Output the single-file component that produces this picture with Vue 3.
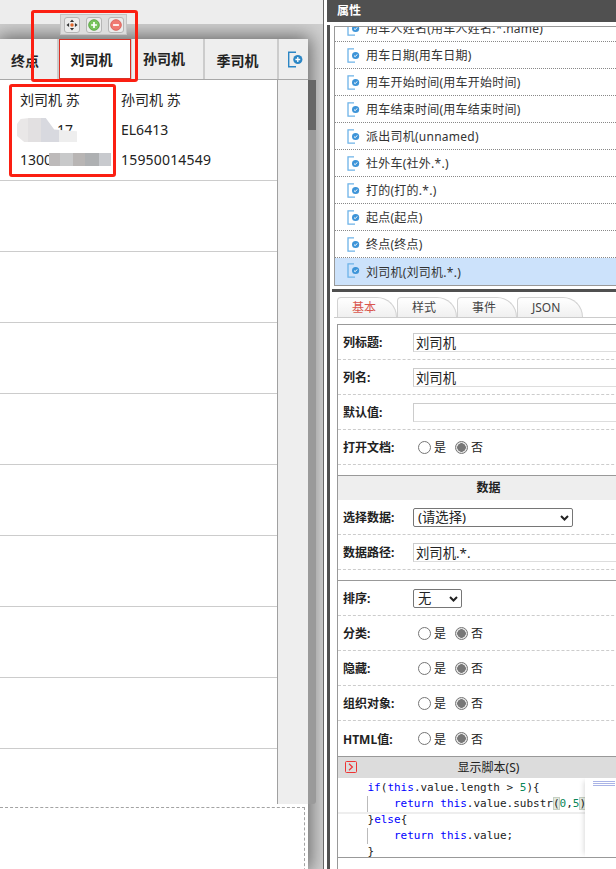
<script setup>
const headers = ['终点', '刘司机', '孙司机', '季司机']
const emptyRows = 8
const fields = [
  '用车人姓名(用车人姓名.*.name)', '用车日期(用车日期)', '用车开始时间(用车开始时间)', '用车结束时间(用车结束时间)',
  '派出司机(unnamed)', '社外车(社外.*.)', '打的(打的.*.)', '起点(起点)', '终点(终点)', '刘司机(刘司机.*.)'
]
const tabs = ['基本', '样式', '事件', 'JSON']
const switchesB = ['分类:', '隐藏:', '组织对象:', 'HTML值:']
</script>

<template>
  <div class="app">
    <section class="left">
      <div class="top-strip"></div>
      <div class="stage">
        <div class="card">
          <div class="head">
            <div v-for="(h, i) in headers" :key="h" class="hcell" :class="['h' + i, { active: i === 1 }]">{{ h }}</div>
            <div class="hcell hadd">
              <svg width="17" height="17" viewBox="0 0 17 17">
                <path d="M9 1.2H1.7v14.6H9" fill="none" stroke="#2b86c5" stroke-width="1.4" />
                <circle cx="10.8" cy="8.5" r="4.6" fill="#2b86c5" />
                <path d="M8.4 8.5h4.8M10.8 6.1v4.8" stroke="#fff" stroke-width="1.3" />
              </svg>
            </div>
          </div>
          <div class="body">
            <div class="grid">
              <div class="row first">
                <div class="cell c1"><div>刘司机 苏</div><div class="hidden-num">17</div><div>1300</div></div>
                <div class="cell"><div>孙司机 苏</div><div>EL6413</div><div class="phone">15950014549</div></div>
              </div>
              <div v-for="n in emptyRows" :key="n" class="row"></div>
            </div>
            <div class="track"></div>
          </div>
          <div class="footer"><div class="dashed"></div></div>
        </div>
      </div>
      <div class="blur blur-a"></div>
      <div class="blur blur-b"></div>
      <div class="toolbar">
        <span class="tbtn">
          <svg width="14" height="14" viewBox="0 0 14 14">
            <path d="M7 .5 9.4 3.6H4.6zM7 13.5 4.6 10.4h4.8zM.5 7l3.1-2.4v4.8zM13.5 7l-3.1 2.4V4.6z" fill="#333" />
            <circle cx="7" cy="7" r="2" fill="#e2662a" />
          </svg>
        </span>
        <span class="tbtn">
          <svg width="14" height="14" viewBox="0 0 14 14">
            <circle cx="7" cy="7" r="6.2" fill="#78c45c" stroke="#55a040" />
            <path d="M3.6 7h6.8M7 3.6v6.8" stroke="#fff" stroke-width="2" />
          </svg>
        </span>
        <span class="tbtn">
          <svg width="14" height="14" viewBox="0 0 14 14">
            <circle cx="7" cy="7" r="6.2" fill="#f07a72" stroke="#d85c54" />
            <path d="M3.6 7h6.8" stroke="#fff" stroke-width="2" />
          </svg>
        </span>
      </div>
      <div class="mark mark-a"></div>
      <div class="mark mark-b"></div>
    </section>

    <div class="split"></div>

    <section class="right">
      <header class="title">属性</header>
      <div class="main">
        <div class="rail"></div>
        <div class="panels">
          <div class="listwrap">
            <ul class="list">
              <li v-for="(f, i) in fields" :key="f" class="item" :class="{ sel: i === fields.length - 1 }">
                <svg width="13" height="15" viewBox="0 0 13 15">
                  <path d="M7 .8H1v13.4h7" fill="none" stroke="#6db3e8" stroke-width="1.3" />
                  <circle cx="8.6" cy="7.5" r="3.6" fill="#3d94d8" />
                  <path d="M7 7.6l1.2 1.1L10.2 6.4" fill="none" stroke="#fff" stroke-width="1" />
                </svg>
                <span>{{ f }}</span>
              </li>
            </ul>
          </div>
          <div class="hbar"></div>
          <div class="tabs">
            <div v-for="(t, i) in tabs" :key="t" class="tab" :class="{ on: i === 0, wide: i === 3 }">{{ t }}</div>
          </div>
          <div class="form">
            <div class="frow"><label>列标题:</label><input class="txt" value="刘司机" /></div>
            <div class="frow"><label>列名:</label><input class="txt" value="刘司机" /></div>
            <div class="frow"><label>默认值:</label><input class="txt" value="" /></div>
            <div class="frow">
              <label>打开文档:</label>
              <span class="radios"><input type="radio" name="r0" /><em>是</em><input type="radio" name="r0" checked /><em>否</em></span>
            </div>
            <div class="section">数据</div>
            <div class="frow">
              <label>选择数据:</label>
              <span class="selbox data">
                <select><option>(请选择)</option></select>
                <svg width="9" height="6" viewBox="0 0 9 6"><path d="M1 1l3.5 3.5L8 1" fill="none" stroke="#222" stroke-width="2" /></svg>
              </span>
            </div>
            <div class="frow"><label>数据路径:</label><input class="txt" value="刘司机.*." /></div>
            <div class="group">
              <div class="frow">
                <label>排序:</label>
                <span class="selbox sort">
                  <select><option>无</option></select>
                  <svg width="9" height="6" viewBox="0 0 9 6"><path d="M1 1l3.5 3.5L8 1" fill="none" stroke="#222" stroke-width="2" /></svg>
                </span>
              </div>
              <div v-for="(s, i) in switchesB" :key="s" class="frow" :class="{ nodash: i === switchesB.length - 1 }">
                <label>{{ s }}</label>
                <span class="radios"><input type="radio" :name="'s' + i" /><em>是</em><input type="radio" :name="'s' + i" checked /><em>否</em></span>
              </div>
            </div>
            <div class="scripthead">
              <span class="sicon">
                <svg width="12" height="12" viewBox="0 0 12 12"><rect x=".5" y=".5" width="11" height="11" rx="1" fill="none" stroke="#e33" /><path d="M4 2.8 7.4 6 4 9.2" fill="none" stroke="#e33" stroke-width="1.2" /></svg>
              </span>
              显示脚本(S)
            </div>
            <div class="code">
              <pre class="src"><div class="ln"><span class="kw">    if</span>(<span class="kw">this</span>.value.length &gt; <span class="num">5</span>){</div><div class="ln cur"><i class="guide"></i><span class="kw">        return this</span>.value.substr<b class="br">(</b><span class="num">0</span>,<span class="num">5</span><b class="br">)</b></div><div class="ln">    }<span class="kw">else</span>{</div><div class="ln"><i class="guide"></i><span class="kw">        return this</span>.value;</div><div class="ln">    }</div></pre>
              <div class="minimap"><i></i><i></i><i></i></div>
            </div>
            <div class="tail"></div>
          </div>
        </div>
      </div>
    </section>
  </div>
</template>

<style scoped>
.app {
  display: flex;
  width: 616px;
  height: 869px;
  overflow: hidden;
  background: #fff;
  font-family: "Noto Sans", "Noto Sans CJK SC", sans-serif;
  color: #222;
  font-size: 12px;
}
.left { position: relative; width: 323px; flex: none; display: flex; flex-direction: column; }
.top-strip { height: 24px; background: #ededed; flex: none; }
.stage { flex: 1; background: #d0d0d0; padding: 15px 15px 0 0; overflow: hidden; min-height: 0; }
.card { width: 308px; height: 830px; display: flex; flex-direction: column; background: #fff; box-shadow: 0 0 18px 2px rgba(0, 0, 0, .55); }
.head { height: 41px; flex: none; display: flex; background: #eee; border-bottom: 1px solid #a8a8a8; box-sizing: border-box; }
.hcell { box-sizing: border-box; display: flex; align-items: center; justify-content: center; font-weight: 700; font-size: 14px; border-right: 2px solid #ccc; padding-right: 7px; }
.h0 { width: 59px; padding-top: 2px; }
.h1 { width: 72px; border: 1px solid #d93025; background: #fff; padding-bottom: 1px; }
.h2 { width: 74px; padding-bottom: 3px; border-left: 1px solid #ccc; }
.h3 { width: 74px; padding-top: 2px; }
.hadd { width: 29px; border: 0; padding: 0 0 0 3px; }
.body { display: flex; height: 724px; flex: none; }
.grid { width: 277px; flex: none; border-right: 1px solid #a0a0a0; box-sizing: content-box; }
.row { height: 70px; border-bottom: 1px solid #ccc; }
.row.first { display: flex; box-sizing: border-box; height: 101px; padding-top: 5px; }
.cell { font-size: 14px; line-height: 30px; color: #222; }
.c1 { width: 121px; padding-left: 20px; box-sizing: border-box; }
.hidden-num { padding-left: 37px; }
.phone { letter-spacing: .18px; }
.track { flex: 1; background: #eee; }
.footer { flex: 1; padding: 3px 3px 0 0; background: #fff; min-height: 0; }
.dashed { height: 100px; border: 1px dashed #a3a3a3; border-left: 0; box-sizing: border-box; }
.left::after {
  content: "";
  position: absolute;
  left: 308px;
  top: 80px;
  width: 8px;
  height: 724px;
  background: linear-gradient(#666 0 50px, #9a9a9a 50px);
  border-radius: 0 0 3px 0;
}
.blur { position: absolute; }
.blur-a {
  left: 17px;
  top: 118px;
  width: 60px;
  height: 24px;
  background: linear-gradient(90deg, #e9e7e7 0 18%, #e2e0e1 18% 40%, #d8d9df 40% 70%, #eeeeee 70%);
  clip-path: polygon(0 25%, 6% 4%, 20% 0, 48% 0, 62% 48%, 100% 55%, 100% 100%, 12% 100%, 0 75%);
}
.blur-b { left: 49px; top: 153px; width: 62px; height: 13px; background: linear-gradient(90deg, #bdbaba 0 18%, #c8c9ca 18% 38%, #b8b5b4 38% 58%, #aeb0b2 58% 80%, #c8cace 80%); }
.toolbar { position: absolute; left: 60px; top: 14px; width: 67px; height: 21px; box-sizing: border-box; display: flex; align-items: center; gap: 6px; padding: 0 3px; background: #ddd; border: 1px solid #c4c4c4; }
.tbtn { width: 16px; height: 16px; box-sizing: border-box; display: flex; align-items: center; justify-content: center; background: #ececec; border: 1px solid #b5b5b5; border-radius: 3px; flex: none; }
.tbtn svg { flex: none; width: 12px; height: 12px; }
.mark { position: absolute; border: 3px solid #fb1f12; border-radius: 3px; box-sizing: border-box; }
.mark-a { left: 31px; top: 10px; width: 107px; height: 72px; }
.mark-b { left: 9px; top: 84px; width: 107px; height: 93px; }

.split { width: 4px; flex: none; border-left: 1px solid #666; box-sizing: border-box; background: #fff; }
.right { flex: 1; min-width: 0; display: flex; flex-direction: column; }
.title { height: 22px; flex: none; background: #505050; color: #fff; font-weight: 700; font-size: 12px; line-height: 21px; padding-left: 10px; }
.main { flex: 1; display: flex; min-height: 0; padding-top: 3px; }
.rail { width: 3px; flex: none; background: #505050; }
.panels { flex: 1; min-width: 0; padding-left: 4px; overflow: hidden; }
.listwrap { height: 260px; margin-top: 1px; border: 1px solid #999; border-right: 0; box-sizing: border-box; overflow: hidden; }
.list { list-style: none; margin: -12px 0 0; padding: 0; }
.item { height: 26px; border-bottom: 1px dotted #888; display: flex; align-items: center; padding-left: 12px; gap: 6px; font-size: 12px; letter-spacing: .25px; color: #333; white-space: nowrap; }
.item.sel { background: #cce2fb; border-bottom: 0; height: 32px; align-items: flex-start; padding-top: 5px; box-sizing: border-box; }
.hbar { height: 3px; background: #505050; margin: 3px 0 0 -2px; }
.tabs { display: flex; height: 20px; padding: 5px 0 0 3px; border-bottom: 1px solid #ccc; }
.tab { width: 60px; padding-left: 14px; line-height: 20px; background: linear-gradient(#fff, #f0f0f0); border: 1px solid #d2d2d2; border-bottom: 0; border-radius: 4px 20px 0 0; box-sizing: border-box; font-size: 12px; color: #444; flex: none; }
.tab.wide { width: 66px; }
.tab.on { color: #d9574f; }
.form { margin: 6px 0 0 3px; width: 302px; border: 1px solid #999; border-right: 0; border-bottom: 0; height: 545px; box-sizing: border-box; }
.frow { height: 35px; box-sizing: border-box; border-bottom: 1px dashed #ccc; display: flex; align-items: center; padding-left: 5px; white-space: nowrap; }
.frow label { width: 70px; flex: none; font-weight: 700; font-size: 12px; color: #222; }
.txt { width: 260px; height: 19px; flex: none; box-sizing: border-box; border: 1px solid #ddd; border-top-color: #ccc; border-left-color: #ccc; padding: 0 2px; font: 13.33px "Noto Sans", "Noto Sans CJK SC", sans-serif; color: #222; outline: 0; }
.radios { display: flex; align-items: center; padding-left: 5px; font-size: 12px; }
.radios em { font-style: normal; margin: 0 9px 0 3px; color: #222; }
.radios input { appearance: none; width: 13px; height: 13px; margin: 0; border: 1px solid #767676; border-radius: 50%; background: #fff; }
.radios input:checked { background: radial-gradient(circle, #777 0 4px, #e4e4e4 4.5px); }
.section { height: 25px; margin-top: 10px; background: #eee; border-top: 1px solid #999; box-sizing: border-box; text-align: center; font-weight: 700; line-height: 24px; font-size: 12px; }
.selbox { position: relative; display: block; height: 19px; flex: none; }
.selbox.data { width: 160px; }
.selbox.sort { width: 49px; }
.selbox select { appearance: none; display: block; width: 100%; height: 19px; box-sizing: border-box; padding: 0 0 0 4px; line-height: 16px; font: 13.33px/16px "Noto Sans", "Noto Sans CJK SC", sans-serif; background: #fff; color: #222; border: 1px solid #767676; border-radius: 2px; }
.selbox svg { position: absolute; right: 4px; top: 7px; pointer-events: none; }
.group { margin-top: 10px; border-top: 1px solid #999; }
.frow.nodash { border-bottom: 0; }
.scripthead { height: 22px; box-sizing: border-box; background: #dcdcdc; border-top: 1px solid #999; position: relative; text-align: center; line-height: 21px; font-size: 12px; }
.sicon { position: absolute; left: 7px; top: 4px; display: flex; }
.code { position: relative; height: 79px; overflow: hidden; font-size: 0; }
.src { margin: 2px 0 0; font: 11px/16px "DejaVu Sans Mono", monospace; color: #222; width: 247px; overflow: hidden; height: 77px; background: #fff; }
.ln { position: relative; height: 16px; padding-left: 3px; white-space: pre; }
.ln.cur { background: #fff; box-shadow: 0 2px 0 #eee; }
.kw { color: #00f; }
.num { color: #098658; }
.br { font-weight: 400; background: #e3eadf; outline: 1px solid #c6cfc2; outline-offset: -1px; }
.guide { position: absolute; left: 29px; top: 0; bottom: 0; width: 1px; background: #bbb; }
.minimap { position: absolute; left: 247px; top: 0; bottom: 0; width: 55px; background: #fff; box-shadow: -4px 0 5px -3px rgba(0, 0, 0, .15); padding: 3px 0 0 8px; box-sizing: border-box; }
.minimap i { display: block; height: 1px; width: 22px; margin-bottom: 1px; background: #aab4e6; }
.tail { height: 12px; border-top: 1px solid #999; }
</style>

<style>
html, body { margin: 0; overflow: hidden; }
</style>
